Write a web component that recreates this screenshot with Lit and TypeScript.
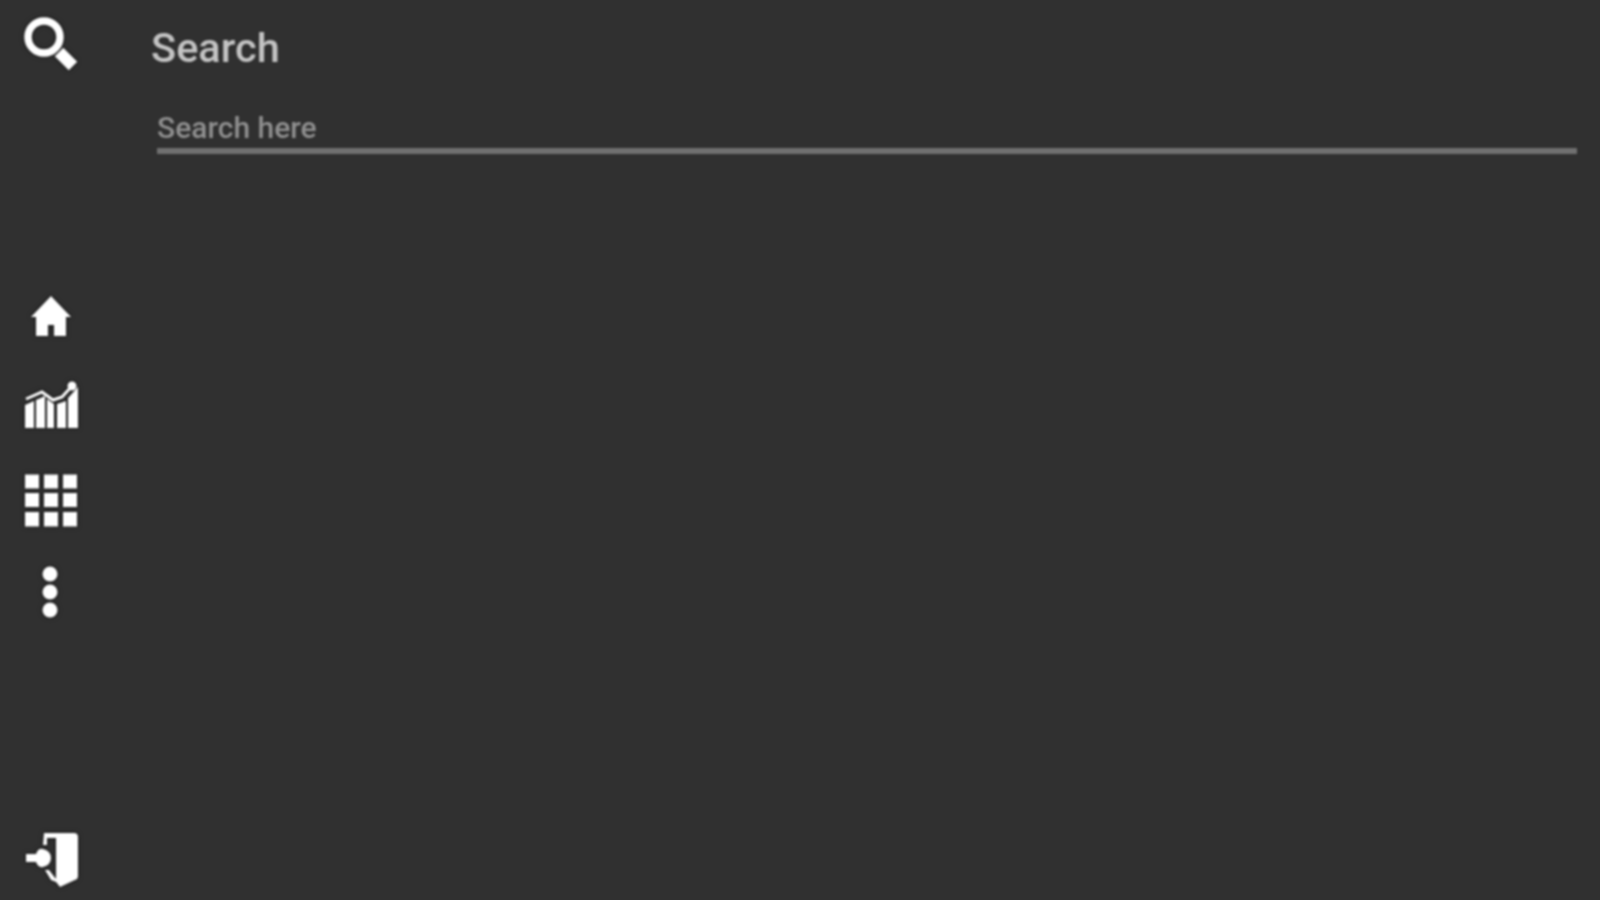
import { LitElement, html, css } from 'lit'
import { customElement } from 'lit/decorators.js'

@customElement('app-root')
export class AppRoot extends LitElement {
  static styles = css`
    :host {
      display: flex;
      width: 1600px;
      height: 900px;
      overflow: hidden;
      background: #303030;
      font-family: Roboto, "Liberation Sans", sans-serif;
    }

    .rail {
      width: 102px;
      flex: none;
      display: flex;
      flex-direction: column;
      align-items: center;
      padding: 14px 0 12px;
      box-sizing: border-box;
    }

    .rail svg {
      display: block;
      width: 60px;
      height: 60px;
      fill: #fff;
      filter: blur(1px) drop-shadow(0 0 2px #161616);
    }

    .nav {
      display: flex;
      flex-direction: column;
      gap: 32px;
      margin-top: 213px;
    }

    .exit {
      margin-top: auto;
    }

    .main {
      flex: 1;
      min-width: 0;
      padding: 22px 23px 0 55px;
      filter: blur(1px);
    }

    h1 {
      margin: 0 0 0 -6px;
      font-size: 41.5px;
      line-height: 52px;
      font-weight: 500;
      color: #c4c4c4;
    }

    input {
      display: block;
      width: 100%;
      box-sizing: border-box;
      margin-top: 32px;
      padding: 0;
      height: 48px;
      border: none;
      border-bottom: 6px solid #707070;
      outline: none;
      background: transparent;
      font: 500 30px Roboto, "Liberation Sans", sans-serif;
      color: #bdbdbd;
    }

    input::placeholder {
      color: #909090;
      opacity: 1;
    }
  `

  render() {
    return html`
      <div class="rail">
        <svg viewBox="0 0 60 60">
          <circle cx="23" cy="23" r="16" fill="none" stroke="#fff" stroke-width="7.5" />
          <path d="M38 38 L52 52" stroke="#fff" stroke-width="12" />
        </svg>

        <div class="nav">
          <svg viewBox="0 0 60 60">
            <path d="M30 9 L50 30 L45 30 L45 49 L33 49 L33 38 L27 38 L27 49 L15 49 L15 30 L10 30 Z" />
          </svg>
          <svg viewBox="0 0 60 60">
            <g transform="translate(-1 -7)">
              <path d="M6 27 L22 20 L33 28 L42 25 L52 14" fill="none" stroke="#fff" stroke-width="3" />
              <circle cx="52" cy="14" r="4.5" />
              <path d="M5 33 L14 29 L14 56 L5 56 Z" />
              <path d="M16 28 L25 24 L25 56 L16 56 Z" />
              <path d="M27 27 L34 32 L34 56 L27 56 Z" />
              <path d="M37 32 L46 29 L46 56 L37 56 Z" />
              <path d="M48 26 L58 15 L58 56 L48 56 Z" />
            </g>
          </svg>
          <svg viewBox="0 0 60 60">
            <rect x="4" y="3.5" width="14" height="14" />
            <rect x="23" y="3.5" width="14" height="14" />
            <rect x="42" y="3.5" width="14" height="14" />
            <rect x="4" y="22" width="14" height="14" />
            <rect x="23" y="22" width="14" height="14" />
            <rect x="42" y="22" width="14" height="14" />
            <rect x="4" y="41" width="14" height="14.5" />
            <rect x="23" y="41" width="14" height="14.5" />
            <rect x="42" y="41" width="14" height="14.5" />
          </svg>
          <svg viewBox="0 0 60 60">
            <circle cx="29" cy="11" r="7.5" />
            <circle cx="29" cy="29" r="7.5" />
            <circle cx="29" cy="47" r="7.5" />
          </svg>
        </div>

        <svg class="exit" viewBox="0 0 60 60">
          <path d="M23 5 L53 5 Q57 5 57 9 L57 48 Q57 51 54 52 L39 59 L35 54 L35 10 L23 10 Z" />
          <path d="M23 5 L35 5 L35 10 L26 10 L26 17 L22 17 Z" />
          <path d="M24 42 L28 42 L35 51 L35 54 L30 52 Z" />
          <path d="M5 26 L15 26 Q17 20 22 21 Q30 23 30 30 Q30 37 22 39 Q17 40 15 34 L5 34 Z" />
        </svg>
      </div>

      <div class="main">
        <h1>Search</h1>
        <input type="text" placeholder="Search here" />
      </div>
    `
  }
}
